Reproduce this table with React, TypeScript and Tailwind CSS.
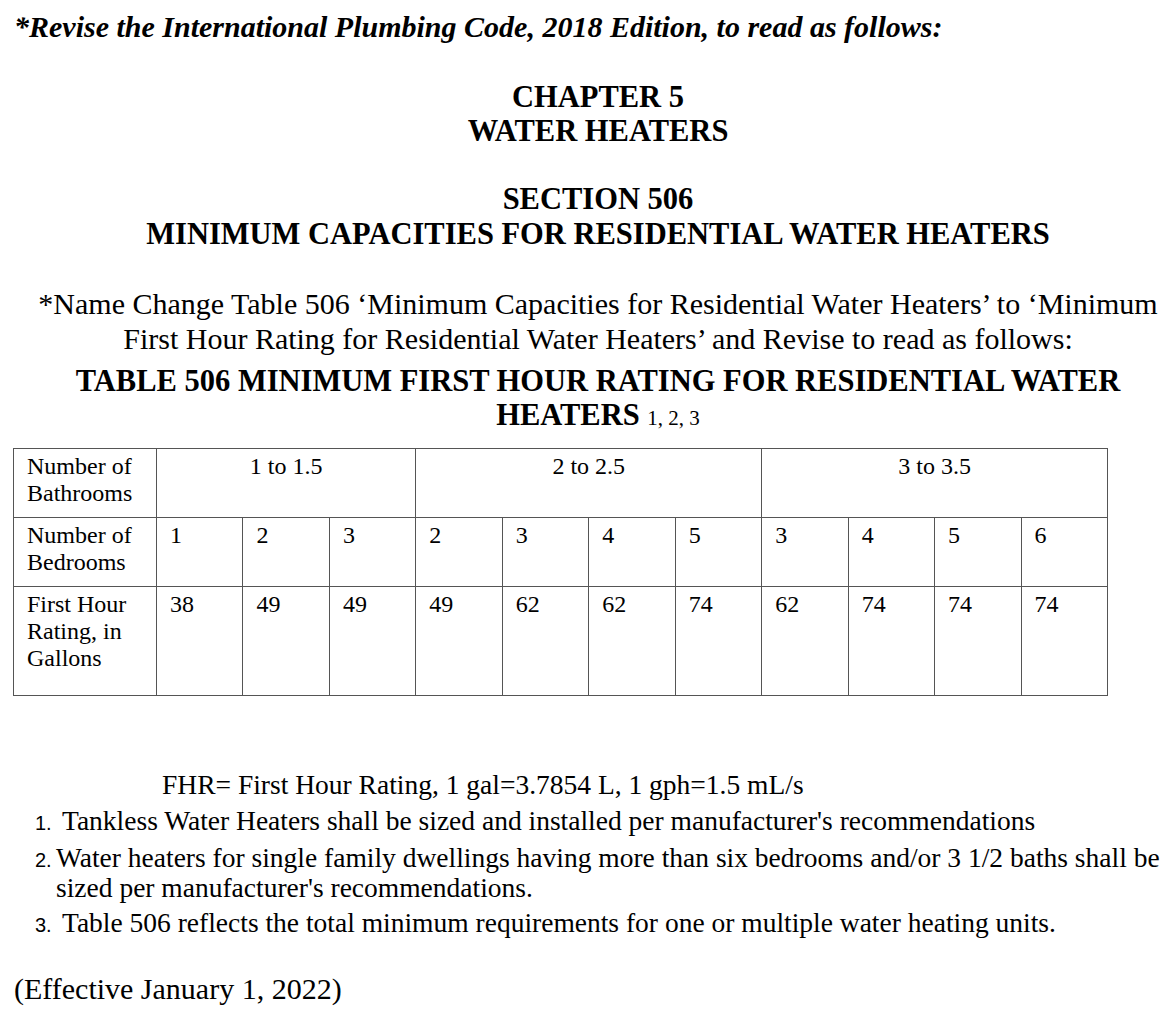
import React from 'react';

const bedrooms = ['1', '2', '3', '2', '3', '4', '5', '3', '4', '5', '6'];
const ratings = ['38', '49', '49', '49', '62', '62', '74', '62', '74', '74', '74'];

const cell = 'border border-[#555] align-top text-left pl-[13px] pt-[4px] font-normal';
const span = 'border border-[#555] align-top text-center pt-[4px] font-normal';

const App = () => {
  return (
    <div className="w-[1175px] h-[1019px] bg-white text-black font-['Liberation_Serif',serif] overflow-hidden">
      <p className="pl-[14px] pt-[10px] text-[30px] leading-[34px] font-bold italic">
        *Revise the International Plumbing Code, 2018 Edition, to read as follows:
      </p>

      <div className="mt-[36px] pl-[21px] text-center text-[30.5px] leading-[34px] font-bold">
        <div>CHAPTER 5</div>
        <div>WATER HEATERS</div>
      </div>

      <div className="mt-[34px] pl-[21px] text-center text-[30.5px] leading-[35px] font-bold">
        <div>SECTION 506</div>
        <div>MINIMUM CAPACITIES FOR RESIDENTIAL WATER HEATERS</div>
      </div>

      <p className="mt-[34px] pl-[21px] text-center text-[30px] leading-[35px] whitespace-nowrap">
        *Name Change Table 506 ‘Minimum Capacities for Residential Water Heaters’ to ‘Minimum
        <br />
        First Hour Rating for Residential Water Heaters’ and Revise to read as follows:
      </p>

      <div className="mt-[8px] pl-[21px] text-center text-[30.5px] leading-[34px] font-bold">
        <div>TABLE 506 MINIMUM FIRST HOUR RATING FOR RESIDENTIAL WATER</div>
        <div>
          HEATERS <span className="text-[21px] font-normal">1, 2, 3</span>
        </div>
      </div>

      <table className="mt-[13px] ml-[13px] w-[1095px] border-collapse text-[24px] leading-[27px] table-fixed">
        <colgroup>
          <col className="w-[143px]" />
          {bedrooms.map((_, i) => (
            <col key={i} />
          ))}
        </colgroup>
        <tbody>
          <tr className="h-[69px]">
            <th className={cell}>
              Number of
              <br />
              Bathrooms
            </th>
            <td colSpan={3} className={span}>
              1 to 1.5
            </td>
            <td colSpan={4} className={span}>
              2 to 2.5
            </td>
            <td colSpan={4} className={span}>
              3 to 3.5
            </td>
          </tr>
          <tr className="h-[69px]">
            <th className={cell}>
              Number of
              <br />
              Bedrooms
            </th>
            {bedrooms.map((b, i) => (
              <td key={i} className={cell}>
                {b}
              </td>
            ))}
          </tr>
          <tr className="h-[109px]">
            <th className={cell}>
              First Hour
              <br />
              Rating, in
              <br />
              Gallons
            </th>
            {ratings.map((r, i) => (
              <td key={i} className={cell}>
                {r}
              </td>
            ))}
          </tr>
        </tbody>
      </table>

      <div className="mt-[74px] text-[27.5px] leading-[30px]">
        <p className="pl-[162px]">FHR= First Hour Rating, 1 gal=3.7854 L, 1 gph=1.5 mL/s</p>
        <div className="mt-[6px] flex items-baseline pl-[35px]">
          <span className="w-[27px] shrink-0 font-['Liberation_Sans',sans-serif] text-[20px]">1.</span>
          <span>Tankless Water Heaters shall be sized and installed per manufacturer's recommendations</span>
        </div>
        <div className="mt-[5px] flex items-baseline pl-[35px]">
          <span className="w-[21px] shrink-0 font-['Liberation_Sans',sans-serif] text-[20px]">2.</span>
          <span className="whitespace-nowrap">
            Water heaters for single family dwellings having more than six bedrooms and/or 3 1/2 baths shall be
            <br />
            sized per manufacturer's recommendations.
          </span>
        </div>
        <div className="mt-[5px] flex items-baseline pl-[35px]">
          <span className="w-[27px] shrink-0 font-['Liberation_Sans',sans-serif] text-[20px]">3.</span>
          <span>Table 506 reflects the total minimum requirements for one or multiple water heating units.</span>
        </div>
        <p className="mt-[32px] pl-[14px] text-[30px] leading-[34px]">(Effective January 1, 2022)</p>
      </div>
    </div>
  );
};

export default App;
